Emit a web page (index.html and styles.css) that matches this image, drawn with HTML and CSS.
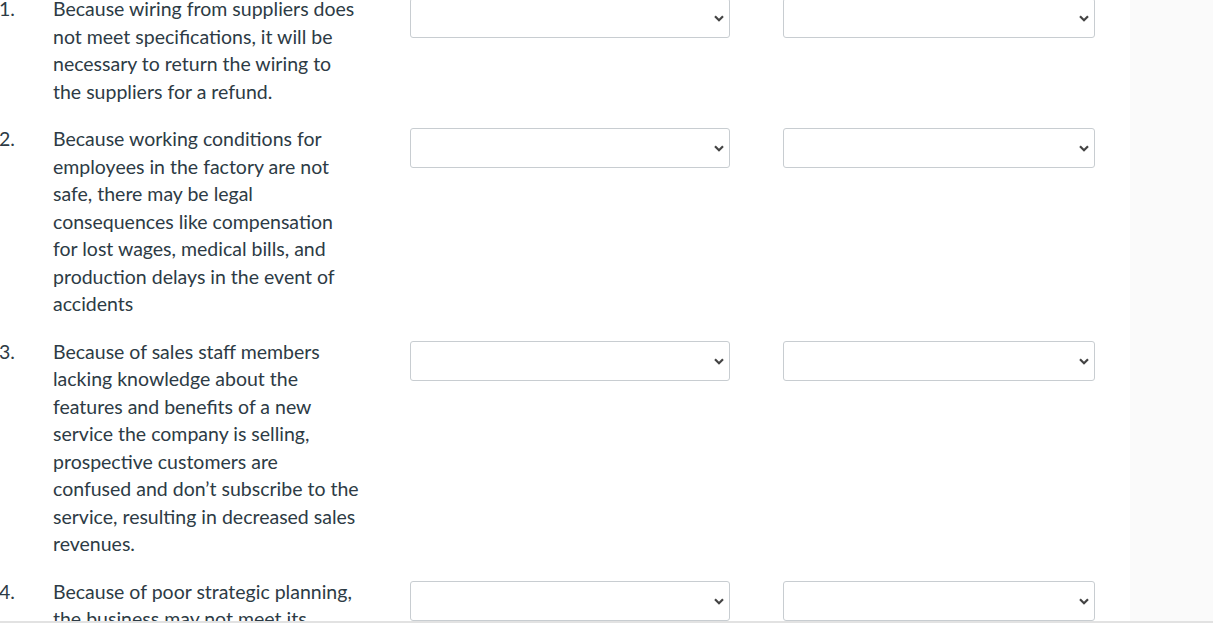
FILE: index.html
```html
<!DOCTYPE html>
<html lang="en">
<head>
<meta charset="utf-8">
<title>Matching questions</title>
<link rel="stylesheet" href="styles.css">
</head>
<body>
<div class="page">
  <main class="main">
    <ol class="questions">
      <li class="question">
        <span class="num">1.</span>
        <p class="text">Because wiring from suppliers does not meet specifications, it will be necessary to return the wiring to the suppliers for a refund.</p>
        <div class="select-wrap first">
          <select class="select" aria-label="Answer 1a"><option></option></select>
          <svg class="chevron" viewBox="0 0 10 7" aria-hidden="true"><path d="M1 1.2 L5 5.2 L9 1.2" /></svg>
        </div>
        <div class="select-wrap second">
          <select class="select" aria-label="Answer 1b"><option></option></select>
          <svg class="chevron" viewBox="0 0 10 7" aria-hidden="true"><path d="M1 1.2 L5 5.2 L9 1.2" /></svg>
        </div>
      </li>
      <li class="question">
        <span class="num">2.</span>
        <p class="text">Because working conditions for employees in the factory are not safe, there may be legal consequences like compensation for lost wages, medical bills, and production delays in the event of accidents</p>
        <div class="select-wrap first">
          <select class="select" aria-label="Answer 2a"><option></option></select>
          <svg class="chevron" viewBox="0 0 10 7" aria-hidden="true"><path d="M1 1.2 L5 5.2 L9 1.2" /></svg>
        </div>
        <div class="select-wrap second">
          <select class="select" aria-label="Answer 2b"><option></option></select>
          <svg class="chevron" viewBox="0 0 10 7" aria-hidden="true"><path d="M1 1.2 L5 5.2 L9 1.2" /></svg>
        </div>
      </li>
      <li class="question">
        <span class="num">3.</span>
        <p class="text">Because of sales staff members lacking knowledge about the features and benefits of a new service the company is selling, prospective customers are<br>confused and don’t subscribe to the service, resulting in decreased sales revenues.</p>
        <div class="select-wrap first">
          <select class="select" aria-label="Answer 3a"><option></option></select>
          <svg class="chevron" viewBox="0 0 10 7" aria-hidden="true"><path d="M1 1.2 L5 5.2 L9 1.2" /></svg>
        </div>
        <div class="select-wrap second">
          <select class="select" aria-label="Answer 3b"><option></option></select>
          <svg class="chevron" viewBox="0 0 10 7" aria-hidden="true"><path d="M1 1.2 L5 5.2 L9 1.2" /></svg>
        </div>
      </li>
      <li class="question">
        <span class="num">4.</span>
        <p class="text">Because of poor strategic planning, the business may not meet its objectives and goals.</p>
        <div class="select-wrap first">
          <select class="select" aria-label="Answer 4a"><option></option></select>
          <svg class="chevron" viewBox="0 0 10 7" aria-hidden="true"><path d="M1 1.2 L5 5.2 L9 1.2" /></svg>
        </div>
        <div class="select-wrap second">
          <select class="select" aria-label="Answer 4b"><option></option></select>
          <svg class="chevron" viewBox="0 0 10 7" aria-hidden="true"><path d="M1 1.2 L5 5.2 L9 1.2" /></svg>
        </div>
      </li>
    </ol>
  </main>
  <aside class="side"></aside>
</div>
<div class="bottom-line"></div>
</body>
</html>
```

FILE: styles.css
```css
html, body {
  margin: 0;
  padding: 0;
  background: #ffffff;
  overflow: hidden;
}

body {
  font-family: Lato, "Noto Sans", "Liberation Sans", sans-serif;
  color: #2d3b45;
  font-size: 19.5px;
}

.page {
  display: flex;
  min-height: 100vh;
}

.main {
  width: 1130px;
  flex: none;
  background: #ffffff;
}

.side {
  flex: 1;
  background: #fafafa;
}

.questions {
  list-style: none;
  margin: -5px 0 0 -1px;
  padding: 0;
}

.question {
  display: flex;
  align-items: flex-start;
  padding-bottom: 20px;
}

.num {
  width: 54px;
  flex: none;
  line-height: 27.5px;
}

.text {
  width: 307px;
  flex: none;
  margin: 0;
  line-height: 27.5px;
}

.select-wrap {
  position: relative;
  flex: none;
  margin-top: 3px;
  height: 40px;
}

.select-wrap.first {
  width: 320px;
  margin-left: 50px;
}

.select-wrap.second {
  width: 312px;
  margin-left: 53px;
}

.select {
  appearance: none;
  -webkit-appearance: none;
  box-sizing: border-box;
  width: 100%;
  height: 100%;
  margin: 0;
  border: 1px solid #c8cdd1;
  border-radius: 3px;
  background: #ffffff;
  font: inherit;
  color: inherit;
  padding: 0 30px 0 10px;
}

.chevron {
  position: absolute;
  right: 6px;
  top: 17px;
  width: 10px;
  height: 7px;
  pointer-events: none;
}

.chevron path {
  fill: none;
  stroke: #444444;
  stroke-width: 2.2;
}

.bottom-line {
  position: fixed;
  left: 0;
  right: 0;
  bottom: 0;
  height: 2px;
  background: #e2e2e2;
}
```
